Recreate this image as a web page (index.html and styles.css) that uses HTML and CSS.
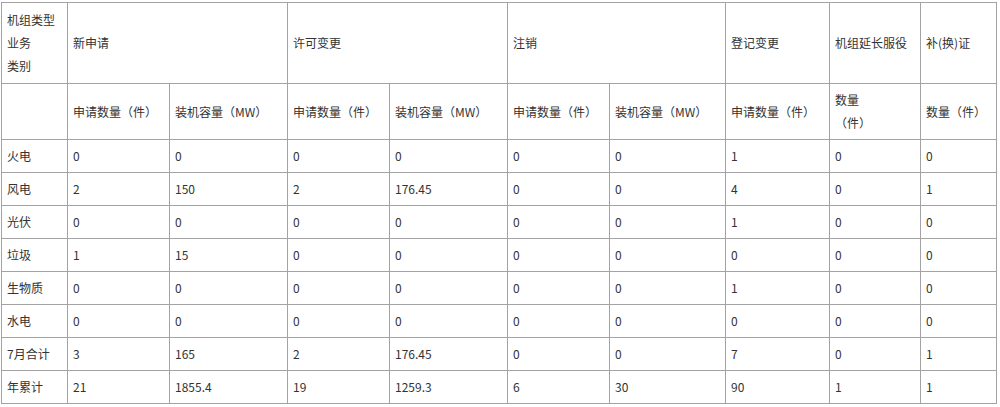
FILE: index.html
```html
<!DOCTYPE html>
<html lang="zh-CN">
<head>
<meta charset="utf-8">
<title>机组业务统计</title>
<link rel="stylesheet" href="styles.css">
</head>
<body>
<div class="wrap">
<table class="stats">
  <colgroup>
    <col class="c1"><col class="c2"><col class="c3"><col class="c4"><col class="c5">
    <col class="c6"><col class="c7"><col class="c8"><col class="c9"><col class="c10">
  </colgroup>
  <thead>
    <tr class="h1">
      <td>机组类型<br>业务<br>类别</td>
      <td colspan="2">新申请</td>
      <td colspan="2">许可变更</td>
      <td colspan="2">注销</td>
      <td>登记变更</td>
      <td>机组延长服役</td>
      <td>补(换)证</td>
    </tr>
    <tr class="h2">
      <td></td>
      <td>申请数量（件）</td>
      <td>装机容量（MW）</td>
      <td>申请数量（件）</td>
      <td>装机容量（MW）</td>
      <td>申请数量（件）</td>
      <td>装机容量（MW）</td>
      <td>申请数量（件）</td>
      <td>数量<br>（件）</td>
      <td>数量（件）</td>
    </tr>
  </thead>
  <tbody>
    <tr><td>火电</td><td>0</td><td>0</td><td>0</td><td>0</td><td>0</td><td>0</td><td>1</td><td>0</td><td>0</td></tr>
    <tr><td>风电</td><td>2</td><td>150</td><td>2</td><td>176.45</td><td>0</td><td>0</td><td>4</td><td>0</td><td>1</td></tr>
    <tr><td>光伏</td><td>0</td><td>0</td><td>0</td><td>0</td><td>0</td><td>0</td><td>1</td><td>0</td><td>0</td></tr>
    <tr><td>垃圾</td><td>1</td><td>15</td><td>0</td><td>0</td><td>0</td><td>0</td><td>0</td><td>0</td><td>0</td></tr>
    <tr><td>生物质</td><td>0</td><td>0</td><td>0</td><td>0</td><td>0</td><td>0</td><td>1</td><td>0</td><td>0</td></tr>
    <tr><td>水电</td><td>0</td><td>0</td><td>0</td><td>0</td><td>0</td><td>0</td><td>0</td><td>0</td><td>0</td></tr>
    <tr><td>7月合计</td><td>3</td><td>165</td><td>2</td><td>176.45</td><td>0</td><td>0</td><td>7</td><td>0</td><td>1</td></tr>
    <tr><td>年累计</td><td>21</td><td>1855.4</td><td>19</td><td>1259.3</td><td>6</td><td>30</td><td>90</td><td>1</td><td>1</td></tr>
  </tbody>
</table>
</div>
</body>
</html>
```

FILE: styles.css
```css
html, body {
  margin: 0;
  padding: 0;
  background: #ffffff;
}

.wrap {
  padding: 2px 0 0 1px;
}

.stats {
  border-collapse: collapse;
  table-layout: fixed;
  width: 996px;
  font-family: "Microsoft YaHei", "Noto Sans CJK SC", "Noto Sans", sans-serif;
  font-size: 12px;
  color: #333333;
  text-spacing-trim: space-all;
}

.stats td {
  border: 1px solid #a3a3a3;
  padding: 4px 5px 5px 5px;
  line-height: 23px;
  text-align: left;
  vertical-align: middle;
  white-space: nowrap;
}

.stats .h1 td {
  height: 71px;
}

.stats tbody td {
  height: 23px;
}

.c1 { width: 66px; }
.c2 { width: 102px; }
.c3 { width: 118px; }
.c4 { width: 102px; }
.c5 { width: 118px; }
.c6 { width: 102px; }
.c7 { width: 116px; }
.c8 { width: 104px; }
.c9 { width: 91px; }
.c10 { width: 76px; }
```
